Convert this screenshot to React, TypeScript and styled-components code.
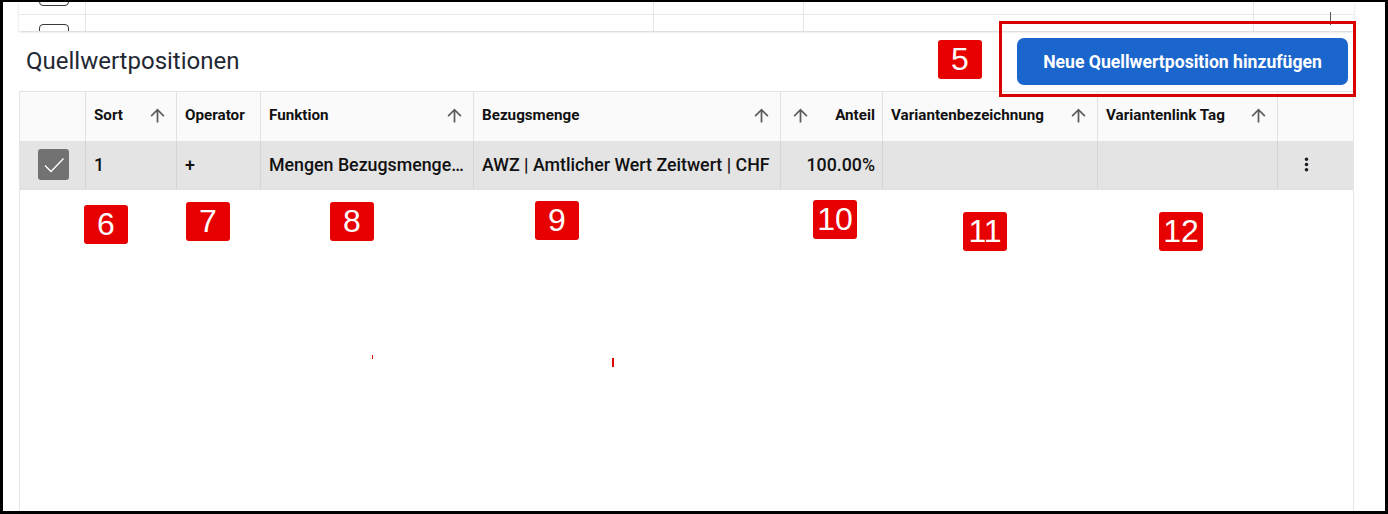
import React from "react";
import styled, { createGlobalStyle } from "styled-components";
import { MdArrowUpward, MdMoreVert } from "react-icons/md";

const GlobalStyle = createGlobalStyle`
  html, body {
    margin: 0;
    padding: 0;
    background: #fff;
  }
  body {
    font-family: Roboto, "Liberation Sans", Arial, sans-serif;
  }
`;

const Page = styled.div`
  position: relative;
  width: 1388px;
  height: 514px;
`;

const Frame = styled.div`
  box-sizing: border-box;
  width: 100%;
  height: 100%;
  border: solid #000;
  border-width: 2px 3px 3px 3px;
  padding: 0 31px 0 16px;
  display: flex;
  flex-direction: column;
  overflow: hidden;
`;

/* partially scrolled table at the top */
const TopTable = styled.div`
  height: 29px;
  overflow: hidden;
  box-shadow: 0 1px 2px rgba(0, 0, 0, 0.18);
  flex: 0 0 auto;
`;

const TopRows = styled.div`
  margin-top: -36px;
`;

const TopRow = styled.div`
  display: grid;
  grid-template-columns: 67px 568px 150px 450px 1fr;
  height: 49px;
  border-bottom: 1px solid #e8e8e8;
  box-sizing: border-box;
`;

const TopCell = styled.div`
  border-right: 1px solid #e6e6e6;
  display: flex;
  align-items: center;
  justify-content: center;
  &:last-child {
    border-right: none;
  }
`;

const EmptyBox = styled.div`
  width: 28px;
  height: 29px;
  margin-left: 4px;
  border: 1.5px solid #3a3a3a;
  border-radius: 4px;
`;

const Heading = styled.div`
  height: 60px;
  display: flex;
  align-items: center;
  justify-content: space-between;
  flex: 0 0 auto;
`;

const Title = styled.h2`
  margin: 0 0 0 7px;
  font-size: 24px;
  font-weight: 400;
  color: #1f2833;
`;

const PrimaryButton = styled.button`
  height: 47px;
  width: 331px;
  margin-right: 6px;
  margin-top: 1px;
  border: none;
  border-radius: 7px;
  background: #1a66cc;
  color: #fff;
  font-family: Roboto, "Liberation Sans", Arial, sans-serif;
  font-size: 17.6px;
  font-weight: 700;
  cursor: pointer;
`;

const Table = styled.div`
  flex: 1 1 auto;
  border: 1px solid #e6e6e6;
  border-bottom: none;
  border-top-color: #e2e2e2;
`;

const Row = styled.div<{ $head?: boolean }>`
  display: grid;
  grid-template-columns: 66px 91px 84px 213px 307px 102px 215px 180px 1fr;
  height: 49px;
  background: ${(p) => (p.$head ? "#fafafa" : "#e4e4e4")};
  border-bottom: ${(p) => (p.$head ? "none" : "1px solid #e0e0e0")};
  box-sizing: border-box;
`;

const HeadCell = styled.div<{ $right?: boolean }>`
  display: flex;
  flex-direction: ${(p) => (p.$right ? "row-reverse" : "row")};
  align-items: center;
  justify-content: space-between;
  padding: ${(p) => (p.$right ? "0 7px 3px 9px" : "0 8px 3px 8px")};
  border-right: 1px solid #e2e2e2;
  font-size: 15.2px;
  font-weight: 700;
  color: #111;
  white-space: nowrap;
  overflow: hidden;
  &:last-child {
    border-right: none;
  }
`;

const SortIcon = styled(MdArrowUpward)`
  flex: 0 0 auto;
  color: #5c5c5c;
`;

const Cell = styled.div<{ $right?: boolean; $center?: boolean }>`
  display: flex;
  align-items: center;
  justify-content: ${(p) => (p.$right ? "flex-end" : p.$center ? "center" : "flex-start")};
  padding: ${(p) => (p.$right ? "0 7px 1px 8px" : "0 8px 1px 8px")};
  border-right: 1px solid #d6d6d6;
  font-size: 17.8px;
  font-weight: 500;
  color: #111;
  min-width: 0;
  &:last-child {
    border-right: none;
  }
`;

const Ellipsis = styled.span`
  overflow: hidden;
  text-overflow: ellipsis;
  white-space: nowrap;
`;

const CheckBox = styled.div`
  width: 31px;
  height: 31px;
  margin-left: 2px;
  border-radius: 3px;
  background: #727272;
  display: flex;
  align-items: center;
  justify-content: center;
`;

const MenuCell = styled(Cell)`
  padding-left: 18px;
`;

/* annotation overlay */
const Badge = styled.div<{ $x: number; $y: number }>`
  position: absolute;
  left: ${(p) => p.$x}px;
  top: ${(p) => p.$y}px;
  width: 44px;
  height: 39px;
  border-radius: 3px;
  background: #e60000;
  color: #fff;
  font-family: "Liberation Sans", Arial, sans-serif;
  font-size: 32px;
  line-height: 39px;
  text-align: center;
`;

const Marker = styled.div`
  position: absolute;
  left: 999px;
  top: 21px;
  width: 357px;
  height: 76px;
  box-sizing: border-box;
  border: 3px solid #d90000;
`;

const Speck = styled.div<{ $x: number; $y: number; $w: number; $h: number }>`
  position: absolute;
  left: ${(p) => p.$x}px;
  top: ${(p) => p.$y}px;
  width: ${(p) => p.$w}px;
  height: ${(p) => p.$h}px;
  background: #e00000;
`;

const Caret = styled.div`
  position: absolute;
  left: 1330px;
  top: 12px;
  width: 1px;
  height: 13px;
  background: #555;
`;

const headers = [
  { label: "", sort: false },
  { label: "Sort", sort: true },
  { label: "Operator", sort: false },
  { label: "Funktion", sort: true },
  { label: "Bezugsmenge", sort: true },
  { label: "Anteil", sort: true, right: true },
  { label: "Variantenbezeichnung", sort: true },
  { label: "Variantenlink Tag", sort: true },
  { label: "", sort: false },
];

const badges = [
  { n: "5", x: 938, y: 40 },
  { n: "6", x: 84, y: 205 },
  { n: "7", x: 186, y: 202 },
  { n: "8", x: 330, y: 202 },
  { n: "9", x: 535, y: 201 },
  { n: "10", x: 813, y: 200 },
  { n: "11", x: 963, y: 212 },
  { n: "12", x: 1159, y: 212 },
];

export default function App() {
  return (
    <>
      <GlobalStyle />
      <Page>
        <Frame>
          <TopTable>
            <TopRows>
              {[0, 1].map((i) => (
                <TopRow key={i}>
                  <TopCell>
                    <EmptyBox />
                  </TopCell>
                  <TopCell />
                  <TopCell />
                  <TopCell />
                  <TopCell />
                </TopRow>
              ))}
            </TopRows>
          </TopTable>

          <Heading>
            <Title>Quellwertpositionen</Title>
            <PrimaryButton>Neue Quellwertposition hinzufügen</PrimaryButton>
          </Heading>

          <Table>
            <Row $head>
              {headers.map((h, i) => (
                <HeadCell key={i} $right={h.right}>
                  <span>{h.label}</span>
                  {h.sort && <SortIcon size={21} />}
                </HeadCell>
              ))}
            </Row>
            <Row>
              <Cell $center>
                <CheckBox>
                  <svg width="24" height="24" viewBox="0 0 24 24">
                    <path d="M3 12.5l6 6L21.5 5.5" fill="none" stroke="#fff" strokeWidth="1.3" />
                  </svg>
                </CheckBox>
              </Cell>
              <Cell>1</Cell>
              <Cell>+</Cell>
              <Cell>
                <Ellipsis>Mengen Bezugsmenge...</Ellipsis>
              </Cell>
              <Cell>
                <Ellipsis>AWZ | Amtlicher Wert Zeitwert | CHF</Ellipsis>
              </Cell>
              <Cell $right>100.00%</Cell>
              <Cell />
              <Cell />
              <MenuCell>
                <MdMoreVert size={21} color="#1c1c24" />
              </MenuCell>
            </Row>
          </Table>
        </Frame>

        <Caret />
        <Marker />
        {badges.map((b) => (
          <Badge key={b.n} $x={b.x} $y={b.y}>
            {b.n}
          </Badge>
        ))}
        <Speck $x={372} $y={355} $w={1} $h={4} />
        <Speck $x={612} $y={358} $w={2} $h={9} />
      </Page>
    </>
  );
}
